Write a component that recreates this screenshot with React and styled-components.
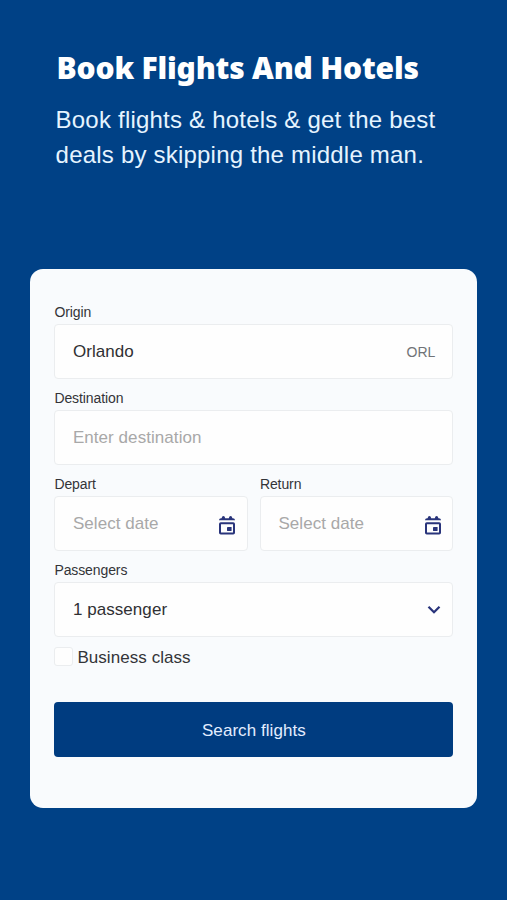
import styled, { createGlobalStyle } from 'styled-components';
import { useState } from 'react';

const GlobalStyle = createGlobalStyle`
  * {
    box-sizing: border-box;
  }
  body {
    margin: 0;
    background: #004186;
    font-family: "Liberation Sans", Arial, sans-serif;
  }
`;

const Page = styled.main`
  display: flex;
  flex-direction: column;
  height: 900px;
  padding: 49px 29.6px 0 30.4px;
`;

const Hero = styled.header`
  height: 219.5px;
  padding-left: 25.2px;
  color: #fff;
`;

const Title = styled.h1`
  margin: 0 0 15px 1px;
  font-family: "Noto Sans", sans-serif;
  font-size: 30px;
  font-weight: 900;
  line-height: 38px;
  letter-spacing: -0.2px;
  white-space: nowrap;
`;

const Subtitle = styled.p`
  margin: 0;
  color: #e6f4ff;
  font-size: 24px;
  line-height: 35px;
  letter-spacing: 0.21px;
  white-space: nowrap;
`;

const Card = styled.form`
  height: 539px;
  padding: 33px 24px 0;
  border-radius: 13px;
  background: #f9fbfd;
`;

const Row = styled.div`
  display: flex;
  gap: 12px;
`;

const Field = styled.label`
  display: flex;
  flex: 1;
  flex-direction: column;
  min-width: 0;
  height: 86px;
`;

const Label = styled.span`
  height: 22px;
  color: #333438;
  font-size: 14px;
  line-height: 20px;
  letter-spacing: -0.1px;
`;

const Box = styled.span`
  display: flex;
  align-items: center;
  height: 55px;
  padding: 1px ${(props) => props.$right || '17px'} 0 17.5px;
  border: 1px solid #ebedef;
  border-radius: 4px;
  background: #fefefe;
`;

const Input = styled.input`
  flex: 1;
  min-width: 0;
  padding: 0;
  border: 0;
  outline: none;
  background: transparent;
  color: #303033;
  font-family: inherit;
  font-size: 17px;
  letter-spacing: 0.06px;

  &::placeholder {
    color: #a8a8a8;
    opacity: 1;
  }
`;

const Code = styled.span`
  color: #707377;
  font-size: 14px;
`;

const Check = styled.label`
  display: flex;
  align-items: center;
  gap: 4px;
  height: 20px;
  margin-top: 1px;
  color: #333438;
  font-size: 17px;
  line-height: 19px;
  letter-spacing: 0.06px;
`;

const CheckText = styled.span`
  padding-top: 2px;
`;

const Checkbox = styled.input`
  appearance: none;
  width: 19px;
  height: 19px;
  margin: 0;
  border: 1px solid #ebedef;
  border-radius: 3px;
  background: #fefefe;

  &:checked {
    background: #003d80;
  }
`;

const SearchButton = styled.button`
  width: 100%;
  height: 55px;
  margin-top: 35.5px;
  padding: 2px 0 0;
  border: 0;
  border-radius: 4px;
  background: #003c80;
  color: #e3edff;
  font-family: inherit;
  font-size: 17px;
  letter-spacing: 0.06px;
`;

const Calendar = styled.svg`
  margin-top: 2px;
`;

function CalendarIcon() {
  return (
    <Calendar width="18" height="20" viewBox="0 0 18 20" fill="none">
      <path d="M1 5.3V4.9Q1.2 3.2 3 3.2H3.6Q4 1 5.4 1Q6.8 1 7.2 3.2H10.8Q11.2 1 12.6 1Q14 1 14.4 3.2H15Q16.8 3.2 17 4.9V5.3Z" fill="#29347b" />
      <rect x="2" y="8.3" width="14" height="10.2" rx="0.8" stroke="#29347b" strokeWidth="2" />
      <rect x="9" y="12" width="4.6" height="4" rx="0.4" fill="#29347b" />
    </Calendar>
  );
}

function ChevronIcon() {
  return (
    <svg width="14" height="10" viewBox="0 0 14 10" fill="none">
      <path d="M1.5 1.8L7 7.2L12.5 1.8" stroke="#29347b" strokeWidth="2.3" />
    </svg>
  );
}

function App() {
  const [origin, setOrigin] = useState("Orlando");
  const [business, setBusiness] = useState(false);

  return (
    <Page>
      <GlobalStyle />
      <Hero>
        <Title>Book Flights And Hotels</Title>
        <Subtitle>
          Book flights &amp; hotels &amp; get the best<br />
          deals by skipping the middle man.
        </Subtitle>
      </Hero>
      <Card onSubmit={(e) => e.preventDefault()}>
        <Field>
          <Label>Origin</Label>
          <Box>
            <Input value={origin} onChange={(e) => setOrigin(e.target.value)} />
            <Code>ORL</Code>
          </Box>
        </Field>
        <Field>
          <Label>Destination</Label>
          <Box>
            <Input placeholder="Enter destination" />
          </Box>
        </Field>
        <Row>
          {["Depart", "Return"].map((name) => (
            <Field key={name}>
              <Label>{name}</Label>
              <Box $right="10.5px">
                <Input placeholder="Select date" />
                <CalendarIcon />
              </Box>
            </Field>
          ))}
        </Row>
        <Field>
          <Label>Passengers</Label>
          <Box $right="11px">
            <Input readOnly value="1 passenger" />
            <ChevronIcon />
          </Box>
        </Field>
        <Check>
          <Checkbox type="checkbox" checked={business} onChange={() => setBusiness(!business)} />
          <CheckText>Business class</CheckText>
        </Check>
        <SearchButton>Search flights</SearchButton>
      </Card>
    </Page>
  );
}

export default App;
